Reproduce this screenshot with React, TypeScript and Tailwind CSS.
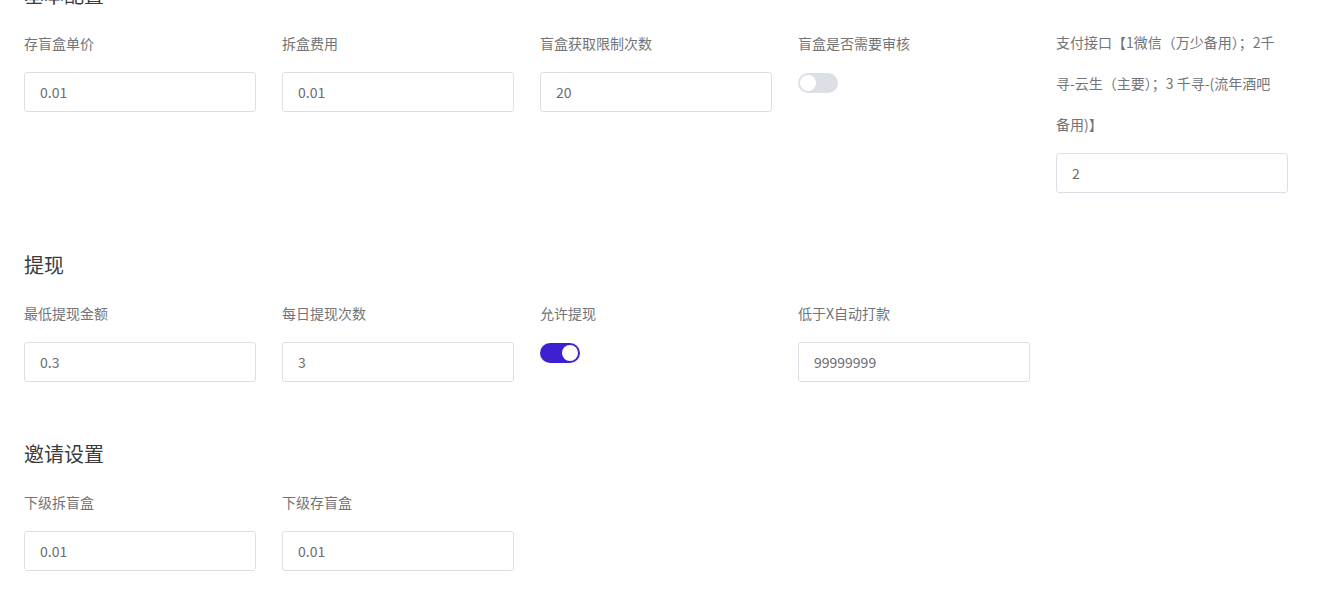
import { useState } from "react";

const font = "font-['Microsoft_YaHei','Noto_Sans_CJK_SC',sans-serif]";

type Field =
  | { kind: "input"; label: React.ReactNode; value: string; tight?: boolean }
  | { kind: "switch"; label: React.ReactNode; on: boolean };

const Switch = ({ initial }: { initial: boolean }) => {
  const [on, setOn] = useState(initial);
  return (
    <button
      type="button"
      onClick={() => setOn(!on)}
      className={
        on
          ? "relative mt-[1px] h-5 w-10 rounded-full bg-[#3f1fd2] transition-colors"
          : "relative mt-[1px] h-5 w-10 rounded-full bg-[#dcdfe6] transition-colors"
      }
    >
      <span
        className={
          on
            ? "absolute top-[2px] left-[22px] h-4 w-4 rounded-full bg-white transition-all"
            : "absolute top-[2px] left-[2px] h-4 w-4 rounded-full bg-white transition-all"
        }
      />
    </button>
  );
};

const FieldItem = ({ field }: { field: Field }) => (
  <div className="w-[232px] shrink-0">
    <div
      className={
        field.kind === "input" && field.tight
          ? "text-[14px] leading-[41px] text-[#727478]"
          : "text-[14px] leading-[42px] text-[#727478]"
      }
    >
      {field.label}
    </div>
    <div className="mt-2">
      {field.kind === "input" ? (
        <input
          defaultValue={field.value}
          className="h-10 w-full rounded-[3px] border border-[#dcdfe6] bg-white px-[15px] text-[14px] text-[#6b6d71] outline-none focus:border-[#3f1fd2]"
        />
      ) : (
        <Switch initial={field.on} />
      )}
    </div>
  </div>
);

const Section = ({ title, fields }: { title: string; fields: Field[] }) => (
  <section className="mb-[58px]">
    <h2 className="mb-[13px] text-[20px] leading-7 font-normal text-[#3a3b3e]">{title}</h2>
    <div className="flex items-start gap-[26px]">
      {fields.map((f, i) => (
        <FieldItem key={i} field={f} />
      ))}
    </div>
  </section>
);

const sections: { title: string; fields: Field[] }[] = [
  {
    title: "基本配置",
    fields: [
      { kind: "input", label: "存盲盒单价", value: "0.01" },
      { kind: "input", label: "拆盒费用", value: "0.01" },
      { kind: "input", label: "盲盒获取限制次数", value: "20" },
      { kind: "switch", label: "盲盒是否需要审核", on: false },
      {
        kind: "input",
        tight: true,
        label: (
          <>
            支付接口【1微信（万少备用）；2千
            <br />
            寻-云生（主要）；3 千寻-(流年酒吧
            <br />
            备用)】
          </>
        ),
        value: "2",
      },
    ],
  },
  {
    title: "提现",
    fields: [
      { kind: "input", label: "最低提现金额", value: "0.3" },
      { kind: "input", label: "每日提现次数", value: "3" },
      { kind: "switch", label: "允许提现", on: true },
      { kind: "input", label: "低于X自动打款", value: "99999999" },
    ],
  },
  {
    title: "邀请设置",
    fields: [
      { kind: "input", label: "下级拆盲盒", value: "0.01" },
      { kind: "input", label: "下级存盲盒", value: "0.01" },
    ],
  },
];

export default function App() {
  return (
    <div className={`min-h-screen overflow-hidden bg-white ${font}`}>
      <div className="mt-[-19px] pl-6 pr-[30px]">
        {sections.map((s) => (
          <Section key={s.title} title={s.title} fields={s.fields} />
        ))}
      </div>
    </div>
  );
}
